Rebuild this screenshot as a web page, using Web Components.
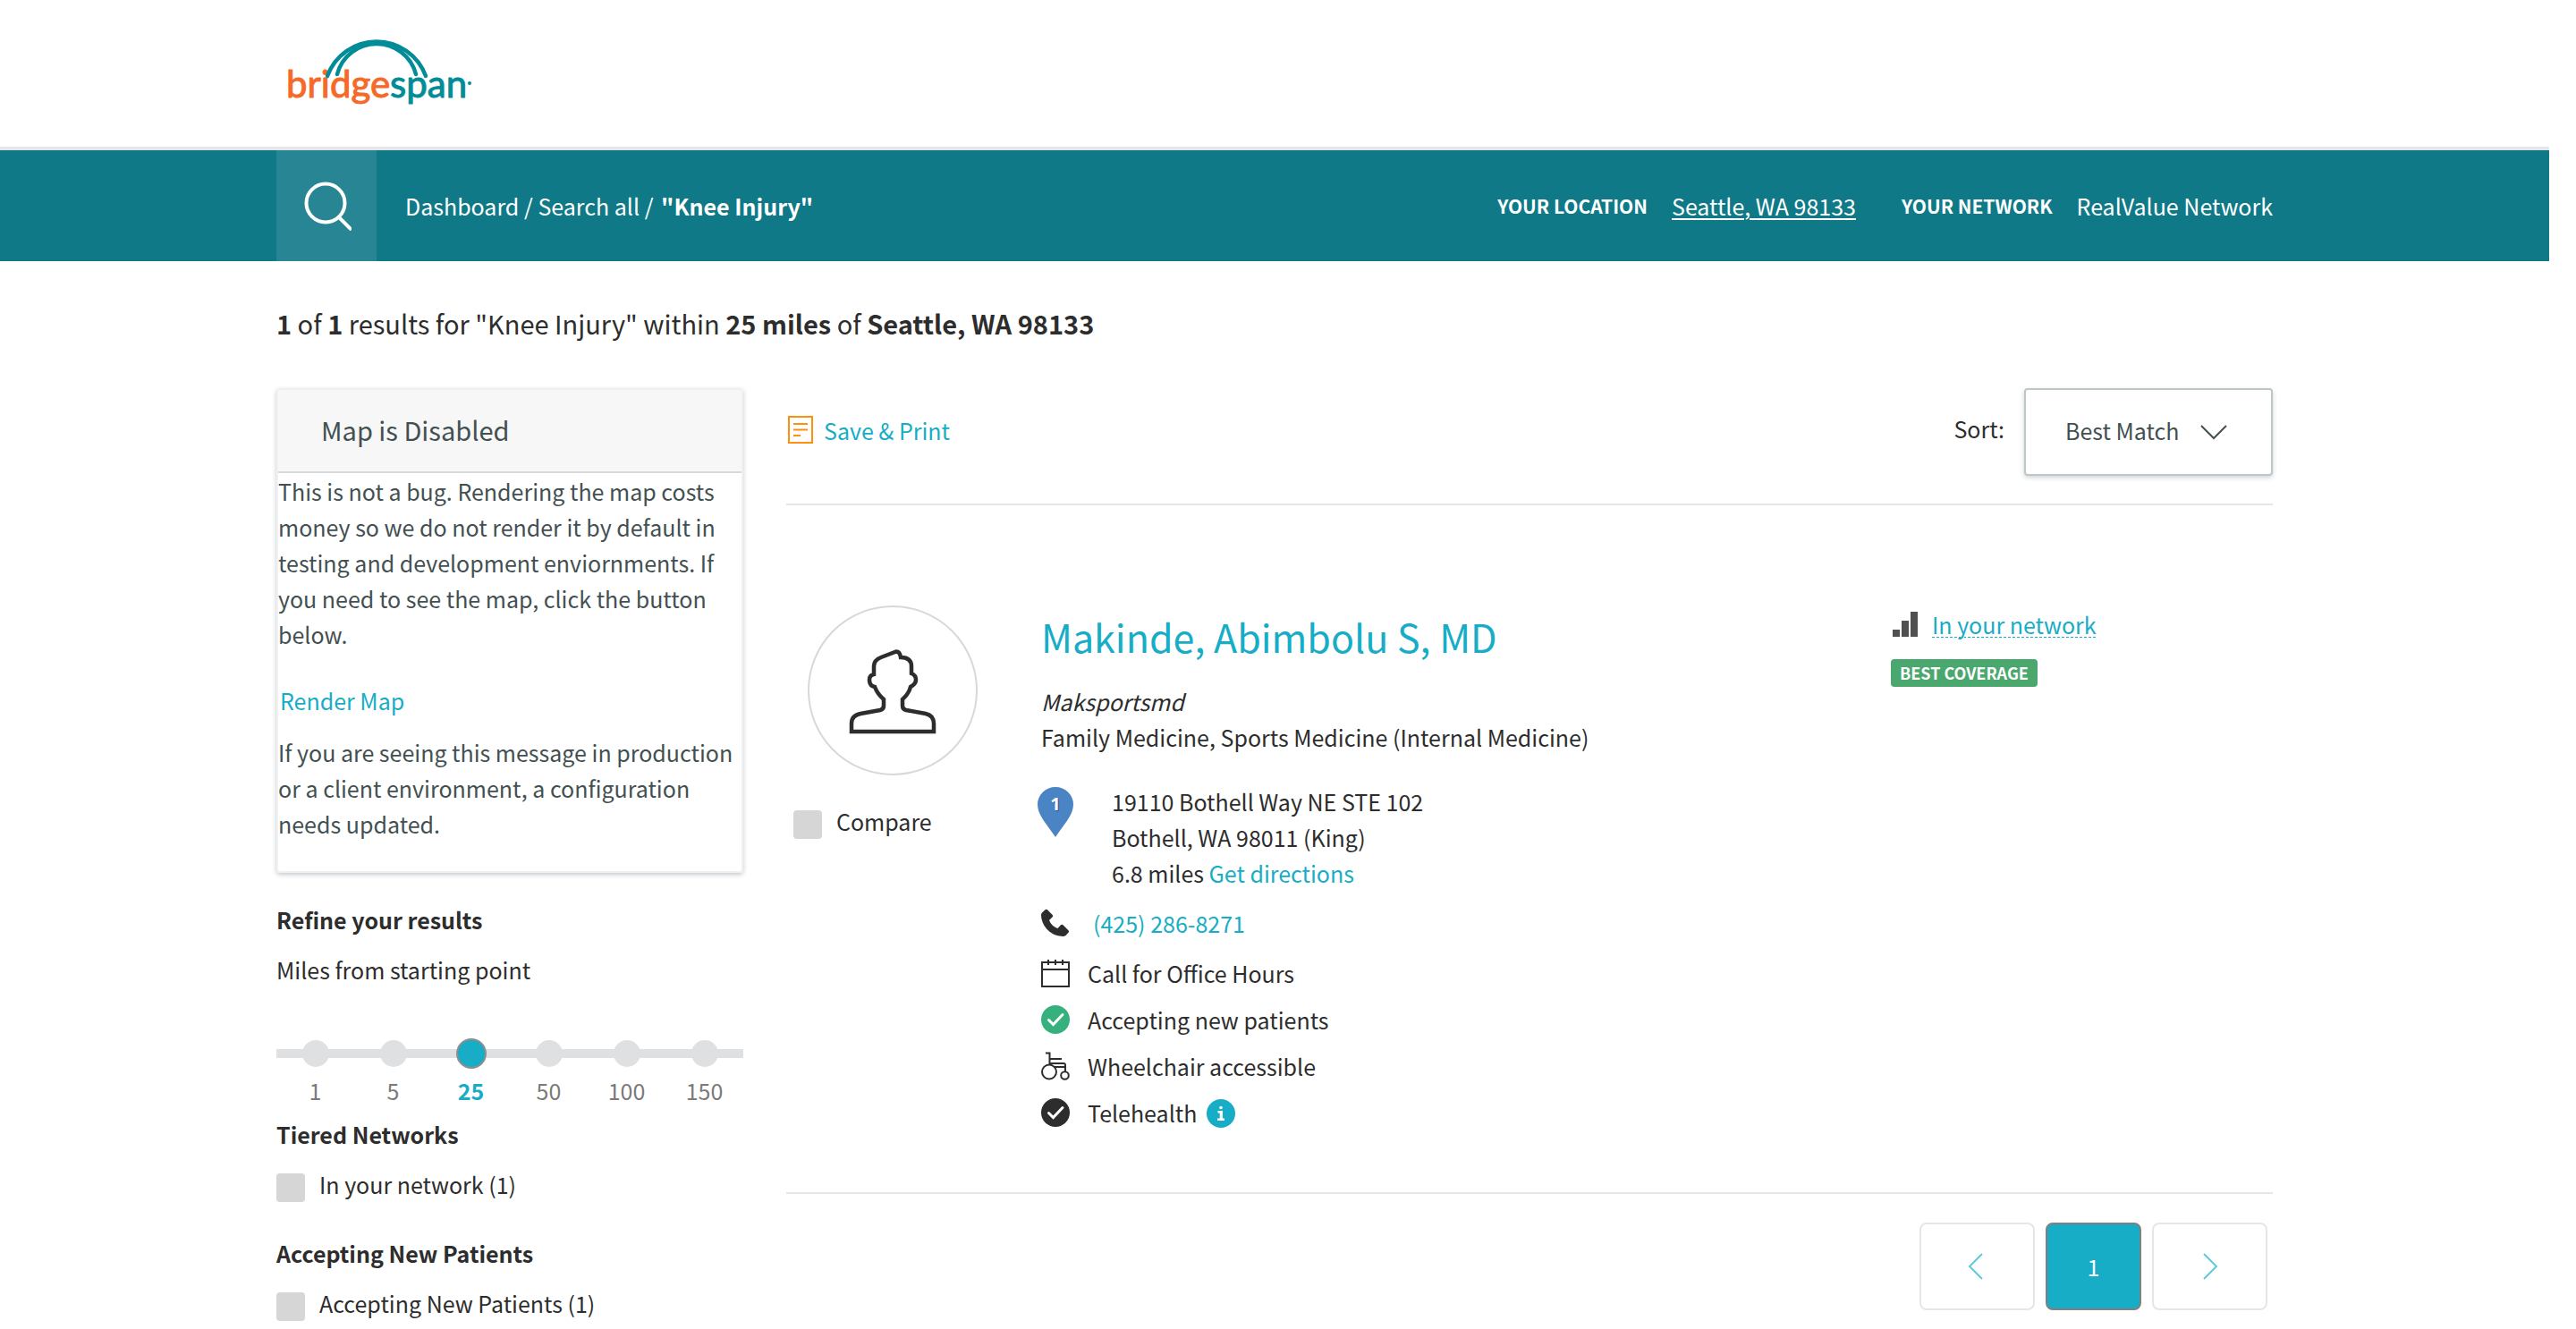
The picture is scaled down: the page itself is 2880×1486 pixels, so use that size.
<!DOCTYPE html>
<html lang="en">
<head>
<meta charset="utf-8">
<title>Search results: Knee Injury</title>
<style>
  body {
    margin: 0;
    padding-right: 30px;
    background: #fff;
    color: #2d2d2d;
    font: 25px/40px "Noto Sans CJK SC", "Noto Sans", sans-serif;
    --link: #17adc6;
    --bar: #107987;
    --rule: #e6e6e6;
    --muted: #435052;
    --box: #d6d6d6;
    --page: 2232px;
  }
</style>
</head>
<body>
<site-header></site-header>
<search-bar></search-bar>
<results-page>
  <span slot="summary"><b>1</b> of <b>1</b> results for "Knee Injury" within <b>25 miles</b> of <b>Seattle, WA 98133</b></span>
  <map-panel slot="side" heading="Map is Disabled"></map-panel>
  <filter-group slot="side" heading="Refine your results">
    <miles-slider></miles-slider>
  </filter-group>
  <filter-group slot="side" heading="Tiered Networks">
    <check-option>In your network (1)</check-option>
  </filter-group>
  <filter-group slot="side" class="spaced" heading="Accepting New Patients">
    <check-option>Accepting New Patients (1)</check-option>
  </filter-group>
  <results-toolbar></results-toolbar>
  <provider-card>
    <span slot="name">Makinde, Abimbolu S, MD</span>
    <span slot="practice">Maksportsmd</span>
    <span slot="specialty">Family Medicine, Sports Medicine (Internal Medicine)</span>
  </provider-card>
  <page-nav></page-nav>
</results-page>

<script>
const define = (name, html, setup) => {
  const template = document.createElement('template');
  template.innerHTML = html;
  customElements.define(name, class extends HTMLElement {
    constructor() {
      super();
      this.attachShadow({ mode: 'open' }).append(template.content.cloneNode(true));
    }
    connectedCallback() { if (setup) setup(this, this.shadowRoot); }
  });
};

const icons = {
  search: [56, '<g fill="none" stroke="#fff" stroke-width="4"><circle cx="27" cy="25" r="21.500"/><path d="M42 41 56 55"/></g>'],
  note: [32, '<g fill="none" stroke="#ff8f0f" stroke-width="2"><path d="M3 1h26v29H3zM8 9h16M8 15.500h16M8 22h8"/></g>'],
  phone: [32, '<path fill="#2d2d2d" d="M1 4.500 4.500 1.200Q6 .2 7.300 1.500L12.700 7Q13.800 8.200 12.700 9.300L9 13Q11.500 19.500 18.500 22L22 18.300Q23.300 17.200 24.500 18.300L30.500 24.200Q31.700 25.500 30.500 26.800L27.500 30Q26.500 31 24 31 13 30.500 6 22.500 0 15 0 7 0 5.500 1 4.500z"/>'],
  calendar: [32, '<path fill="none" stroke="#2d2d2d" stroke-width="2" d="M1 4h30v27H1zM1 12h30M8 1v6M16 1v6M24 1v6"/>'],
  accept: [32, '<circle cx="16" cy="16" r="16" fill="#36b07c"/><path d="m8.500 16.500 5 5L24 10.500" fill="none" stroke="#fff" stroke-width="3" stroke-linecap="round"/>'],
  check: [32, '<circle cx="16" cy="16" r="16" fill="#2d2d2d"/><path d="m8.500 16.500 5 5L24 10.500" fill="none" stroke="#fff" stroke-width="3" stroke-linecap="round"/>'],
  wheelchair: [32, '<g fill="none" stroke="#2d2d2d" stroke-width="2"><path d="M5 1.500h4.500v13M9.500 8H23M10 13h15q2 0 2 2v7M15 17h12"/><circle cx="9" cy="22.500" r="8"/><circle cx="26.500" cy="26.500" r="4.300"/></g>'],
  info: [32, '<circle cx="16" cy="16" r="16" fill="#17adc6"/><g fill="#fff"><circle cx="16" cy="9.500" r="1.800"/><path d="M12.500 13H18v8.500h2V24h-8v-2.500h2.700v-6h-2.200z"/></g>'],
  signal: [32, '<path fill="#505050" d="M2 22h8v8H2zM12 12h8v18h-8zM22 2h8v28h-8z"/>'],
  down: [32, '<path d="M2 9l14 14L30 9" fill="none" stroke="#435052" stroke-width="2"/>'],
  left: [32, '<path d="M21 2 7 16l14 14" fill="none" stroke="#5fcadb" stroke-width="2"/>'],
  right: [32, '<path d="M9 2l14 14L9 30" fill="none" stroke="#5fcadb" stroke-width="2"/>'],
  person: [190, '<circle cx="95" cy="95" r="94" fill="#fff" stroke="#d8d8d8" stroke-width="2"/><path fill="none" stroke="#2d2d2d" stroke-width="4.500" d="M49 141v-9q0-9 10-11l22-4q4-1 4-5v-7q-7-6-10-14-6-1-6-8 0-5 5-6v-9q0-7 8-10l17-6.500q4 0 5 6.500 12 0 12 10v8q5 2 5 7t-6 8q-2 8-9 14v7q0 4 4 5l22 4q9 2 9 11v9z"/>'],
  pin: [56, '<path fill="#4a84c4" d="M24 56C15 42 4 32 4 19.500a20 19.500 0 0 1 40 0C44 32 33 42 24 56z"/>'],
};

define('bs-icon', `<style>:host{display:block;flex:none}svg{display:block}</style>`, (host, root) => {
  const [size, body] = icons[host.getAttribute('name')];
  root.querySelector('svg')?.remove();
  root.innerHTML += `<svg width="${size}" height="${size}" viewBox="0 0 ${size} ${size}" aria-hidden="true">${body}</svg>`;
});

define('site-header', `
<style>
  :host { display: block; border-bottom: 4px solid var(--rule); }
  header { max-width: var(--page); margin: 0 auto; }
  a { display: inline-block; vertical-align: top; }
  svg { display: block; }
  text { font: 42px Lato, sans-serif; stroke-width: 1px; stroke-linejoin: round; }
</style>
<header><a href="#" aria-label="BridgeSpan home">
  <svg width="240" height="164" viewBox="0 0 240 164">
    <text x="11" y="109" fill="#f56a29" stroke="#f56a29">bridge<tspan fill="#028c98" stroke="#028c98">span</tspan></text>
    <g fill="none" stroke="#028c98" stroke-width="4.500" stroke-linecap="round">
      <path d="M57 85A58.500 58.500 0 0 1 167 85"/>
      <path d="M68 83A45.500 45.500 0 0 1 156 83"/>
    </g>
    <circle cx="216" cy="93" r="2" fill="#028c98"/>
  </svg></a></header>`);

define('search-bar', `
<style>
  :host { display: block; background: var(--bar); color: #fff; }
  .row { display: flex; align-items: center; max-width: var(--page); margin: 0 auto; height: 124px; }
  button { width: 112px; height: 124px; border: 0; padding: 0; display: grid; place-items: center; background: #288694; }
  nav { margin-left: 32px; flex: 1; }
  nav b { margin-left: 3px; }
  a { color: inherit; text-decoration: none; }
  .where { display: flex; align-items: center; gap: 27px; }
  .where b { font-size: 21px; }
  .where a { text-decoration: underline; text-decoration-thickness: 2px; text-underline-offset: 3px; margin-right: 24px; }
</style>
<div class="row">
  <button aria-label="Search"><bs-icon name="search"></bs-icon></button>
  <nav><a href="#">Dashboard</a> / <a href="#">Search all</a> / <b>"Knee Injury"</b></nav>
  <div class="where"><b>YOUR LOCATION</b><a href="#">Seattle, WA 98133</a><b>YOUR NETWORK</b><span>RealValue Network</span></div>
</div>`);

define('results-page', `
<style>
  :host { display: block; max-width: var(--page); margin: 0 auto; padding-top: 47px; }
  h1 { margin: 0 0 51px; font-size: 29px; line-height: 44px; font-weight: 400; }
  .cols { display: flex; gap: 48px; }
  aside { flex: 0 0 522px; }
  main { flex: 1; min-width: 0; }
</style>
<h1><slot name="summary"></slot></h1>
<div class="cols"><aside><slot name="side"></slot></aside><main><slot></slot></main></div>`);

define('map-panel', `
<style>
  :host { display: block; margin-bottom: 32px; color: var(--muted); border: 2px solid #eff0f1; border-radius: 4px;
    box-sizing: border-box; box-shadow: 0 2px 5px rgba(60, 75, 90, .3); padding-bottom: 33px; }
  h2 { margin: 0; padding: 0 48px 2px; font-size: 29px; line-height: 89px; font-weight: 400; background: #f7f7f7; border-bottom: 2px solid #d8dadb; }
  p { margin: 0; }
  button { font: inherit; color: var(--link); background: none; border: 0; padding: 0 2px; margin: 34px 0 18px; display: block; }
</style>
<h2></h2>
<p>This is not a bug. Rendering the map costs money so we do not render it by default in testing and development enviornments. If you need to see the map, click the button below.</p>
<button>Render Map</button>
<p>If you are seeing this message in production or a client environment, a configuration needs updated.</p>`,
(host, root) => { root.querySelector('h2').textContent = host.getAttribute('heading'); });

define('filter-group', `
<style>
  :host { display: block; margin-bottom: 9px; }
  :host(.spaced) { margin-top: 37px; }
  h3 { margin: 0 0 16px; font-size: inherit; font-weight: 700; }
</style>
<h3></h3><slot></slot>`,
(host, root) => { root.querySelector('h3').textContent = host.getAttribute('heading'); });

define('miles-slider', `
<style>
  :host { display: block; }
  fieldset { border: 0; margin: 0; padding: 0; min-width: 0; }
  legend { padding: 0; margin-bottom: 57px; }
  .stops { display: grid; grid-template-columns: repeat(6, 1fr); color: #7a7a7a; }
  label { display: grid; justify-items: center; gap: 4px; }
  .dot { display: grid; place-items: center; width: 100%; height: 34px;
    background: linear-gradient(#dfe0e2, #dfe0e2) center / 100% 10px no-repeat; }
  input { appearance: none; margin: 0; width: 30px; height: 30px; border-radius: 50%; background: #dfe0e2; }
  input:checked { box-sizing: border-box; width: 34px; height: 34px; background: var(--link); border: 2px solid #8f8f8f; }
  label:has(:checked) { color: var(--link); font-weight: 700; }
</style>
<fieldset><legend>Miles from starting point</legend>
<div class="stops">
  <label><span class="dot"><input type="radio" name="miles"></span>1</label>
  <label><span class="dot"><input type="radio" name="miles"></span>5</label>
  <label><span class="dot"><input type="radio" name="miles" checked></span>25</label>
  <label><span class="dot"><input type="radio" name="miles"></span>50</label>
  <label><span class="dot"><input type="radio" name="miles"></span>100</label>
  <label><span class="dot"><input type="radio" name="miles"></span>150</label>
</div></fieldset>`);

define('check-option', `
<style>
  :host { display: block; }
  label { display: flex; align-items: flex-end; gap: 16px; }
  input { appearance: none; margin: 0; width: 32px; height: 32px; border-radius: 4px; background: var(--box); }
</style>
<label><input type="checkbox"><span><slot></slot></span></label>`);

define('results-toolbar', `
<style>
  :host { display: flex; align-items: center; justify-content: space-between; padding-bottom: 31px; border-bottom: 2px solid var(--rule); }
  a { display: flex; align-items: center; gap: 10px; color: var(--link); text-decoration: none; padding-bottom: 4px; }
  .sort { display: flex; align-items: center; gap: 22px; }
  .sort label { padding-bottom: 8px; }
  .pick { display: grid; align-items: center; }
  .pick > * { grid-area: 1 / 1; }
  .pick bs-icon { justify-self: end; margin-right: 50px; pointer-events: none; }
  select { appearance: none; font: inherit; color: var(--muted); background: #fff; width: 278px; height: 98px; padding: 0 44px 4px;
    border: 2px solid #c0c5c8; border-radius: 4px; box-shadow: 0 2px 5px rgba(60, 75, 90, .25); }
</style>
<a href="#"><bs-icon name="note"></bs-icon>Save &amp; Print</a>
<div class="sort"><label for="sort">Sort:</label>
  <div class="pick"><select id="sort"><option>Best Match</option></select><bs-icon name="down"></bs-icon></div></div>`);

define('provider-card', `
<style>
  :host { display: grid; grid-template-columns: 285px 1fr 427px; padding: 112px 0 69px; border-bottom: 2px solid var(--rule); }
  .who bs-icon { margin: 0 0 31px 24px; }
  .who check-option { margin-left: 8px; }
  a { color: var(--link); text-decoration: none; }
  h2 { margin: 4px 0 23px; font-size: 43px; line-height: 60px; font-weight: 400; }
  p, address { margin: 0; font-style: normal; }
  .practice { font-style: italic; }
  .place { display: flex; gap: 39px; margin: 32px 0 16px -8px; }
  .pin { display: grid; width: 48px; height: 56px; margin-top: 4px; justify-items: center; }
  .pin > * { grid-area: 1 / 1; }
  .pin bs-icon { width: 48px; }
  .pin b { color: #fff; font: 700 20px/38px "Open Sans", sans-serif; text-shadow: 1px 1px 1px #2c4f9a; z-index: 1; }
  ul { list-style: none; margin: 0; padding: 0; display: grid; gap: 12px; }
  li { display: flex; align-items: center; gap: 20px; }
  li.phone { gap: 26px; margin-bottom: 4px; }
  button { border: 0; padding: 0; background: none; margin-left: -9px; padding-top: 2px; }
  .net { display: flex; align-items: center; gap: 14px; margin-top: 1px; }
  .net a { text-decoration: underline dashed 1px; text-underline-offset: 3px; }
  .badge { display: inline-block; margin-top: 19px; padding: 0 10px; border-radius: 4px; background: #4aa76d; color: #fff;
    font-size: 18px; line-height: 31px; font-weight: 700; }
</style>
<div class="who"><bs-icon name="person"></bs-icon><check-option>Compare</check-option></div>
<div>
  <h2><a href="#"><slot name="name"></slot></a></h2>
  <p class="practice"><slot name="practice"></slot></p>
  <p><slot name="specialty"></slot></p>
  <div class="place"><span class="pin"><bs-icon name="pin"></bs-icon><b>1</b></span>
    <address>19110 Bothell Way NE STE 102<br>Bothell, WA 98011 (King)<br>6.8 miles <a href="#">Get directions</a></address></div>
  <ul>
    <li class="phone"><bs-icon name="phone"></bs-icon><a href="tel:4252868271">(425) 286-8271</a></li>
    <li><bs-icon name="calendar"></bs-icon>Call for Office Hours</li>
    <li><bs-icon name="accept"></bs-icon>Accepting new patients</li>
    <li><bs-icon name="wheelchair"></bs-icon>Wheelchair accessible</li>
    <li><bs-icon name="check"></bs-icon>Telehealth <button aria-label="About telehealth"><bs-icon name="info"></bs-icon></button></li>
  </ul>
</div>
<div>
  <div class="net"><bs-icon name="signal"></bs-icon><a href="#">In your network</a></div>
  <span class="badge">BEST COVERAGE</span>
</div>`);

define('page-nav', `
<style>
  :host { display: block; margin-top: 32px; }
  nav { display: flex; justify-content: flex-end; gap: 12px; padding-right: 6px; }
  button { font: inherit; width: 129px; height: 98px; padding: 0; display: grid; place-items: center; background: #fff; border: 2px solid var(--rule); border-radius: 8px; }
  .current { width: 107px; background: var(--link); color: #fff; border-color: #808080; }
</style>
<nav aria-label="Pages">
  <button aria-label="Previous"><bs-icon name="left"></bs-icon></button>
  <button class="current" aria-current="page">1</button>
  <button aria-label="Next"><bs-icon name="right"></bs-icon></button>
</nav>`);
</script>
</body>
</html>
